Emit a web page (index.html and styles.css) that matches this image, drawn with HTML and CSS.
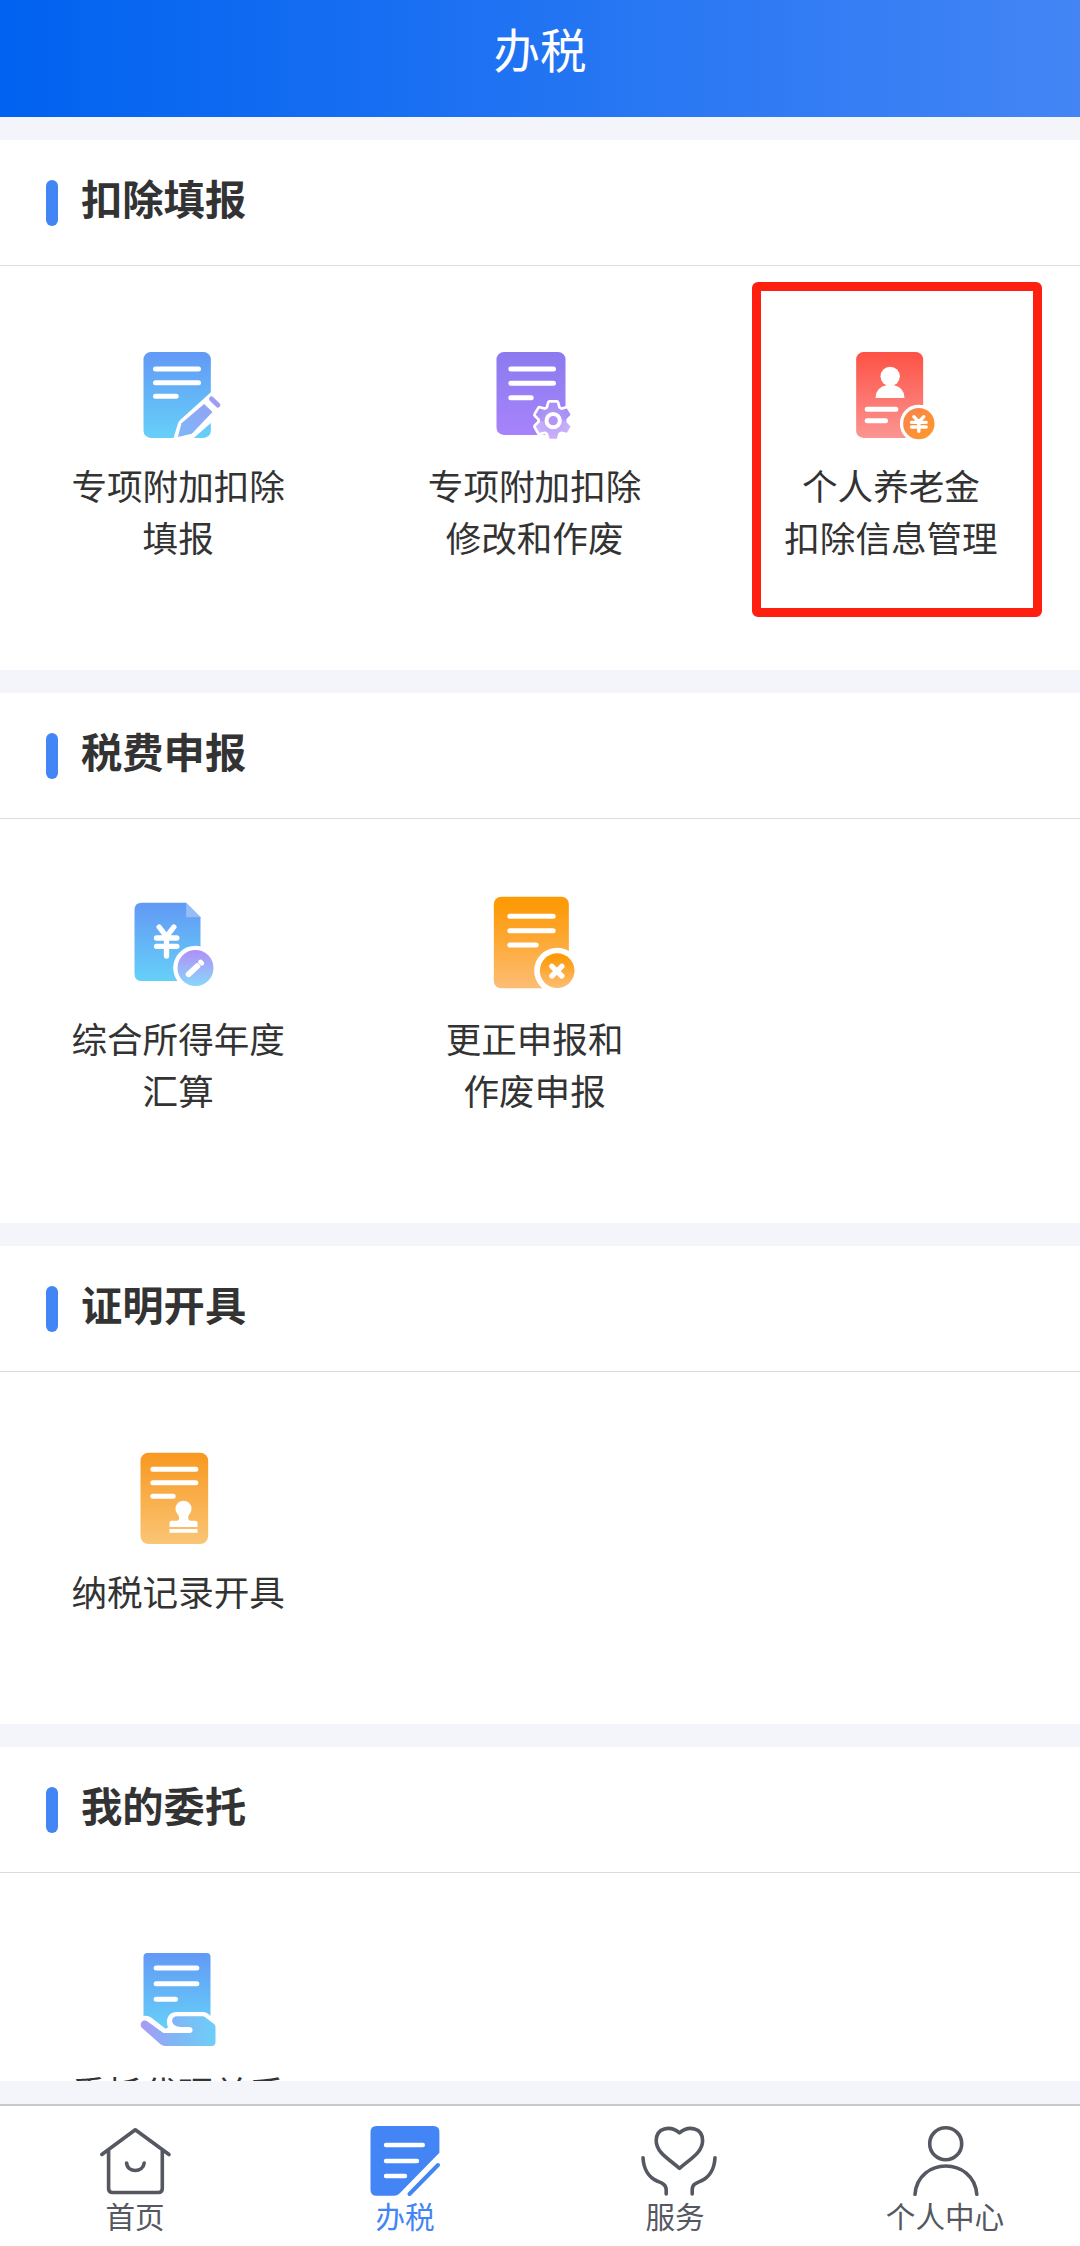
FILE: index.html
```html
<!DOCTYPE html>
<html lang="zh-Hans">
<head>
  <meta charset="UTF-8">
  <meta name="viewport" content="width=device-width, initial-scale=1.0">
  <title>办税</title>
  <link rel="stylesheet" href="styles.css">
</head>
<body>
  <!-- 共用渐变 -->
  <svg class="defs" width="0" height="0">
    <defs>
      <linearGradient id="blue" x1="0" y1="0" x2="0" y2="1">
        <stop offset="0" stop-color="#6299f5"/>
        <stop offset="1" stop-color="#66d0f8"/>
      </linearGradient>
      <linearGradient id="purple" x1="0" y1="0" x2="0" y2="1">
        <stop offset="0" stop-color="#8b7bee"/>
        <stop offset="1" stop-color="#a783fb"/>
      </linearGradient>
      <linearGradient id="gearFill" gradientUnits="userSpaceOnUse" x1="0" y1="215" x2="0" y2="328">
        <stop offset="0" stop-color="#a48cf3"/>
        <stop offset="1" stop-color="#cbb2fc"/>
      </linearGradient>
      <linearGradient id="red" x1="0" y1="0" x2="0" y2="1">
        <stop offset="0" stop-color="#fd5244"/>
        <stop offset="1" stop-color="#fb9593"/>
      </linearGradient>
      <linearGradient id="coin" x1="0" y1="0" x2="1" y2="1">
        <stop offset="0" stop-color="#fb8050"/>
        <stop offset="1" stop-color="#fb9c27"/>
      </linearGradient>
      <linearGradient id="orange" x1="0" y1="0" x2="0" y2="1">
        <stop offset="0.1" stop-color="#fd9a08"/>
        <stop offset="1" stop-color="#fdbd74"/>
      </linearGradient>
      <linearGradient id="amber" x1="0" y1="0" x2="0" y2="1">
        <stop offset="0" stop-color="#f8981f"/>
        <stop offset="1" stop-color="#fac576"/>
      </linearGradient>
      <linearGradient id="violet" x1="0" y1="0" x2="0" y2="1">
        <stop offset="0" stop-color="#b18ff6"/>
        <stop offset="1" stop-color="#86d8fb"/>
      </linearGradient>
      <linearGradient id="pen" x1="1" y1="0" x2="0" y2="1">
        <stop offset="0" stop-color="#93a2f5"/>
        <stop offset="1" stop-color="#7db8f7"/>
      </linearGradient>
      <linearGradient id="hand" x1="0" y1="0" x2="1" y2="0">
        <stop offset="0" stop-color="#a99af5"/>
        <stop offset="0.45" stop-color="#80b6f6"/>
        <stop offset="1" stop-color="#6dcef7"/>
      </linearGradient>
    </defs>
  </svg>

  <header class="header">办税</header>

  <main class="content">
    <section class="card">
      <h2 class="card-title">扣除填报</h2>
      <div class="grid">
        <div class="item">
          <svg class="icon" viewBox="175.5 30 360 330">
            <rect x="252" y="66" width="202" height="258" rx="22" fill="url(#blue)"/>
            <path class="line" d="M288 117H417M288 158H417M288 199H350"/>
            <path d="M455 186L362 270Q357 275 355 281L342 325H402L455 278V186Z" fill="#fff"/>
            <path d="M434 222L459 246L397 311L355 321L366 280Z" fill="url(#pen)"/>
            <path d="M456 207L475 225" stroke="#a09bf3" stroke-width="15" stroke-linecap="round"/>
          </svg>
          <p>专项附加扣除<br>填报</p>
        </div>
        <div class="item">
          <svg class="icon" viewBox="181.5 30 360 330">
            <rect x="246" y="66" width="207" height="249" rx="22" fill="url(#purple)"/>
            <path class="line" d="M289 117H417M289 160H417M289 203H350"/>
            <g fill="#fff" stroke="#fff" stroke-width="16" stroke-linejoin="round">
              <circle cx="416" cy="272" r="40"/>
              <path d="M405 218H427L433 240V304L427 326H405L399 304V240Z"/>
              <path d="M405 218H427L433 240V304L427 326H405L399 304V240Z" transform="rotate(60 416 272)"/>
              <path d="M405 218H427L433 240V304L427 326H405L399 304V240Z" transform="rotate(-60 416 272)"/>
            </g>
            <g fill="url(#gearFill)">
              <circle cx="416" cy="272" r="40"/>
              <path d="M405 218H427L433 240V304L427 326H405L399 304V240Z"/>
              <path d="M405 218H427L433 240V304L427 326H405L399 304V240Z" transform="rotate(60 416 272)"/>
              <path d="M405 218H427L433 240V304L427 326H405L399 304V240Z" transform="rotate(-60 416 272)"/>
            </g>
            <circle cx="416" cy="272" r="20" fill="#b594f9" stroke="#fff" stroke-width="12"/>
          </svg>
          <p>专项附加扣除<br>修改和作废</p>
        </div>
        <div class="item marked">
          <svg class="icon" viewBox="277.5 210 360 330">
            <rect x="353" y="246" width="201" height="258" rx="22" fill="url(#red)"/>
            <circle cx="455" cy="319" r="29" fill="#fff"/>
            <path d="M445 340H465V345Q498 352 498 384H411Q411 352 445 345Z" fill="#fff"/>
            <path class="line" d="M386 418H472M386 452H441"/>
            <circle cx="541" cy="461" r="57" fill="#fff"/>
            <circle cx="541" cy="461" r="47" fill="url(#coin)"/>
            <path d="M526 440L541 456L556 440M541 456V484M519 457H563M519 471H563" fill="none" stroke="#fff" stroke-width="10" stroke-linecap="round"/>
          </svg>
          <p>个人养老金<br>扣除信息管理</p>
        </div>
      </div>
    </section>

    <section class="card">
      <h2 class="card-title">税费申报</h2>
      <div class="grid">
        <div class="item">
          <svg class="icon" viewBox="175.5 39 360 330">
            <path d="M247 68H380L423 112V303H247Q225 303 225 281V90Q225 68 247 68Z" fill="url(#blue)"/>
            <path d="M380 68L423 112H380Z" fill="#95bdf8"/>
            <path d="M299 141L321 170L343 141M321 170V228M291 174H352M291 199H352" fill="none" stroke="#fff" stroke-width="16" stroke-linecap="round"/>
            <circle cx="408" cy="264" r="67" fill="#fff"/>
            <circle cx="408" cy="264" r="54" fill="url(#violet)"/>
            <path d="M387 283L415 257" stroke="#fff" stroke-width="17" stroke-linecap="round"/>
            <path d="M411 244L427 260" stroke="#b79cf6" stroke-width="3"/>
            <path d="M423 246L427 250" stroke="#fff" stroke-width="14" stroke-linecap="round"/>
          </svg>
          <p>综合所得年度<br>汇算</p>
        </div>
        <div class="item">
          <svg class="icon" viewBox="181.5 39 360 330">
            <rect x="238" y="50" width="225" height="275" rx="22" fill="url(#orange)"/>
            <path class="line" d="M286 109H416M286 152H416M286 195H365"/>
            <circle cx="428" cy="272" r="69" fill="#fff"/>
            <circle cx="428" cy="272" r="52" fill="url(#orange)"/>
            <path d="M412 259L442 288M442 259L412 288" stroke="#fff" stroke-width="16" stroke-linecap="round"/>
          </svg>
          <p>更正申报和<br>作废申报</p>
        </div>
      </div>
    </section>

    <section class="card card-short">
      <h2 class="card-title">证明开具</h2>
      <div class="grid">
        <div class="item">
          <svg class="icon" viewBox="175.5 48 360 330">
            <rect x="243" y="68" width="203" height="274" rx="24" fill="url(#amber)"/>
            <path class="line" d="M280 118H409M280 158H409M280 199H341"/>
            <path d="M372 212A24 24 0 0 1 396 236C396 251 385 252 386 265Q386 272 393 272H408Q414 272 414 278V291H330V278Q330 272 336 272H351Q359 272 359 265C359 252 348 251 348 236A24 24 0 0 1 372 212ZM330 297H414V308H330Z" fill="#fff"/>
          </svg>
          <p>纳税记录开具</p>
        </div>
      </div>
    </section>

    <section class="card card-last">
      <h2 class="card-title">我的委托</h2>
      <div class="grid">
        <div class="item">
          <svg class="icon" viewBox="175.5 51 360 330">
            <path d="M264 69H441Q453 69 453 81V258Q443 246 430 246H350C326 246 316 272 326 292L318 296L277 264Q266 256 252 258V81Q252 69 264 69Z" fill="url(#blue)"/>
            <path class="line" d="M290 114H412M290 161H412M290 208H348"/>
            <path d="M265 275L312 309H390Q400 309 399 299Q398 291 389 291H365C332 291 330 259 354 259H428Q434 259 439 263L463 281Q468 285 468 291V336Q468 348 456 348H317Q309 348 303 343L248 294C236 281 251 265 265 275Z" fill="url(#hand)"/>
          </svg>
          <p>委托代理关系</p>
        </div>
      </div>
    </section>
  </main>

  <nav class="tabbar">
    <a class="tab">
      <svg viewBox="0 0 80 80">
        <path d="M6.8 34.5L40.3 9.8L74 34.5M13.6 30.5V68.5Q13.6 72.5 17.6 72.5H63.3Q67.3 72.5 67.3 68.5V30.5M31.6 43C32.5 53 48 53 49.2 43"/>
      </svg>
      <span>首页</span>
    </a>
    <a class="tab active">
      <svg viewBox="0 0 80 80">
        <path class="solid" d="M11.5 6H68.4Q74.4 6 74.4 12V32.7L34.5 73.5Q32.3 75.7 29 75.7H11.5Q5.5 75.7 5.5 69.7V12Q5.5 6 11.5 6Z"/>
        <path class="white" d="M21 25H57.8M21 41H52M21 56H40"/>
        <path class="slash" d="M44.5 74L73 45"/>
      </svg>
      <span>办税</span>
    </a>
    <a class="tab">
      <svg viewBox="0 0 80 80">
        <path d="M44.5 12.8C35 5 21.2 8 21.2 20.7C21.2 32 33 38.5 44.5 48.3C56 38.5 67.6 32 67.6 20.7C67.6 8 54 5 44.5 12.8Z"/>
        <path d="M8 37.7C8.5 49 14 57.5 22 61C27.5 63.3 31.2 64.5 31.2 70V74M80 37.7C79.5 49 74 57.5 66 61C60.5 63.3 57.2 64.5 57.2 70V74"/>
      </svg>
      <span>服务</span>
    </a>
    <a class="tab">
      <svg viewBox="0 0 80 80">
        <circle cx="40.7" cy="23.7" r="16"/>
        <path d="M10 74.3C13 36.5 68.5 36.5 71.8 74.3"/>
      </svg>
      <span>个人中心</span>
    </a>
  </nav>
</body>
</html>
```
FILE: styles.css
```css
*, *::before, *::after {
  box-sizing: border-box;
}
body, html {
  margin: 0;
  padding: 0;
  height: 100%;
  overflow: hidden;
}
body {
  display: flex;
  flex-direction: column;
  background: #f4f5fa;
  color: #333;
  font-family: "Noto Sans CJK SC", sans-serif;
}
.defs {
  position: absolute;
}
.header {
  flex: none;
  height: 117px;
  padding-top: 14px;
  background: linear-gradient(to right, #0062f0, #4385f5);
  color: #fff;
  font-size: 46.5px;
  line-height: 68px;
  text-align: center;
}

/* 内容区 */
.content {
  flex: 1;
  min-height: 0;
  display: flex;
  flex-direction: column;
  gap: 23px;
  padding: 23px 0;
  overflow: hidden;
}
.card {
  flex: none;
  height: 530px;
  background: #fff;
}
.card-short {
  height: 478px;
}
.card-last {
  flex: 1;
  min-height: 0;
  overflow: hidden;
}
.card-title {
  display: flex;
  align-items: center;
  gap: 23px;
  height: 126px;
  margin: 0;
  padding-left: 46px;
  padding-bottom: 11px;
  border-bottom: 1px solid #dcdcde;
  font-size: 41.3px;
  font-weight: 700;
  line-height: 60px;
}
.card-title::before {
  content: "";
  width: 12px;
  height: 46px;
  margin-top: 12px;
  border-radius: 6px;
  background: #4385f5;
}
.grid {
  display: grid;
  grid-template-columns: repeat(3, 33%);
  padding-top: 74px;
}
.item {
  position: relative;
  text-align: center;
}
.item p {
  margin: 9px 0 0;
  font-size: 35.6px;
  line-height: 52px;
}
.icon {
  display: block;
  width: 120px;
  height: 110px;
  margin: 0 auto;
}
.line {
  fill: none;
  stroke: #fff;
  stroke-width: 15;
  stroke-linecap: round;
}

/* 红框标注 */
.marked::after {
  content: "";
  position: absolute;
  top: -58px;
  left: 39px;
  width: 290px;
  height: 335px;
  border: 9px solid #ff1f10;
  border-radius: 6px;
}

/* 底部导航 */
.tabbar {
  flex: none;
  display: flex;
  height: 142px;
  padding-top: 14px;
  border-top: 2px solid #c8c9cb;
  background: #fff;
}
.tab {
  flex: 1;
  display: flex;
  flex-direction: column;
  align-items: center;
  color: #555761;
  font-size: 29.6px;
  line-height: 32px;
}
.tab svg {
  width: 80px;
  height: 80px;
  overflow: visible;
  fill: none;
  stroke: currentColor;
  stroke-width: 3.6;
  stroke-linecap: round;
  stroke-linejoin: round;
}
.tab.active {
  color: #4385f5;
}
.tab .solid {
  fill: currentColor;
  stroke: none;
}
.tab .white {
  stroke: #fff;
  stroke-width: 4.4;
}
.tab .slash {
  stroke-width: 4;
}
```
